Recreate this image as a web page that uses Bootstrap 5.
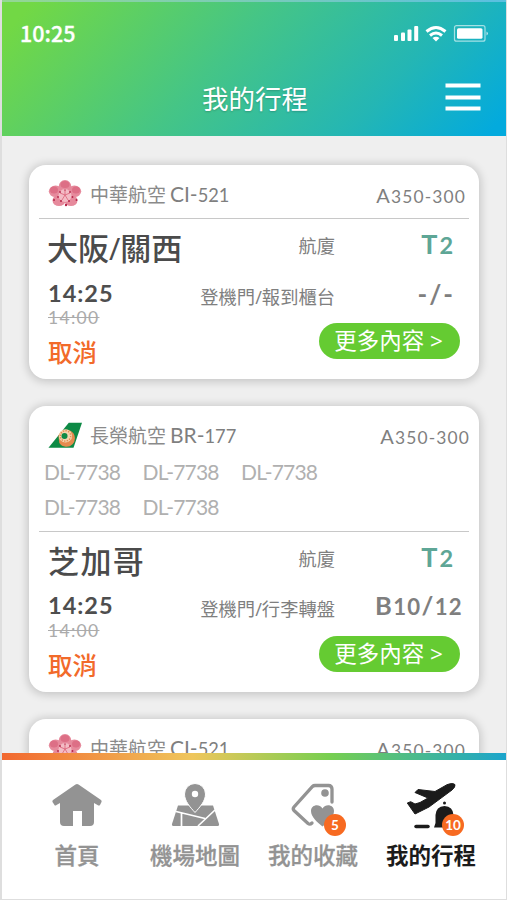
<!DOCTYPE html>
<html lang="zh-Hant">
<head>
<meta charset="utf-8">
<meta name="viewport" content="width=device-width, initial-scale=1">
<title>我的行程</title>
<link href="https://cdn.jsdelivr.net/npm/bootstrap@5.3.0/dist/css/bootstrap.min.css" rel="stylesheet">
<style>
body{font-family:"Open Sans","Noto Sans CJK TC",sans-serif;background:#efefef;color:#7f7f7f}
.phone{height:900px;border:1px solid #dedede;border-left-width:2px;border-top:0}
.app-head{height:136px;flex:none;margin-left:-1px;background:linear-gradient(132deg,#72d845 5%,#45c586 43%,#24b6b4 74%,#03aadd 97%);color:#fff;border-top:2px solid rgba(225,225,225,.4);border-left:1px solid rgba(225,225,225,.45)}
.status-row{height:62px;padding:0 16px 0 18px}
.clock{font:500 21.5px/1 "Noto Sans CJK TC",sans-serif;-webkit-text-stroke:.3px #fff}
.title-row{height:68px}
.title-row h1{font:400 26.5px/1 "Noto Sans CJK TC",sans-serif;text-shadow:0 1px 2px rgba(0,0,0,.2);grid-column:2}
.title-grid{display:grid;grid-template-columns:1fr auto 1fr;padding:0 25px 0 27px}
.trips{padding:29px 27px 0 27px;gap:27px}
.trip{border:0;border-radius:17px;flex:none;box-shadow:0 1px 9px 2px rgba(0,0,0,.17)}
.trip-head{height:53px;padding:5px 14px 0 19px}
.airline{font-size:19px;margin-left:8px;color:#8a8a8a;white-space:nowrap}
.code{font-size:21px;color:#7f7f7f;margin-left:-1px}
.num{font-family:Lato,"Open Sans",sans-serif}
.sm{font-size:.87em}
.model{font-size:20px;letter-spacing:1.150px;padding-top:3px;margin-right:-1px}
.br .model{margin-right:-5px;padding-top:2px}
.shares{height:72px;padding:0 0 1px 15px;margin-top:-5px;margin-bottom:5px;color:#b0b0b0;font-size:21px;letter-spacing:-.8px;line-height:35px}
.share{width:98.500px}
.rule{height:1px;margin:0 10px;background:#c8c8c8}
.trip-body{height:160px}
.left-col{width:166px;padding-left:19px}
.city{font-size:31px;line-height:58px;margin-bottom:2px;font-weight:500;color:#4b4b4b;white-space:nowrap;margin-left:-1px}
.br .city{letter-spacing:1.400px;margin-left:0}
.time{font-size:23.500px;line-height:28px;font-weight:700;color:#4e4e4e;letter-spacing:1px}
.br .time{margin-top:-1px;margin-bottom:1px}
.old{font-size:17.500px;line-height:22px;color:#ababab;text-decoration:line-through;letter-spacing:1.300px}
.cancel{font-size:24.500px;line-height:34px;margin-top:7px;font-weight:500;color:#f26a2a}
.facts{display:grid;grid-template-columns:140px 1fr;grid-template-rows:54px 48px 39px;width:284px;align-items:center}
.lab{font-size:18.3px;text-align:right;white-space:nowrap}
.br .dual-lab{margin-top:-3px}
.val{font-size:26px;font-weight:700;text-align:right;letter-spacing:2px;white-space:nowrap}
.term{margin-top:-3px}
.dual{margin-top:-5px}
.gate{font-size:25.500px;letter-spacing:1.300px;margin-top:-9px}
.term{color:#5ea696;font-size:27px}
.more{grid-column:1/3;justify-self:end;width:141px;height:36px;margin-right:19px;border-radius:18px;background:#65cb32;color:#fff;font-size:22.500px;line-height:34px;padding:0 2px 0 0;border:0}
.stripe{height:7px;flex:none;margin:0 -1px 0 -2px;background:linear-gradient(90deg,#f2672f,#efc65c 38%,#77cf50 65%,#1aa4cd)}
.tabs{height:139px;flex:none;background:#fff;padding:21px 15px 0 16px}
.tab{width:118px;font-size:22.500px;font-weight:500;color:#939393}
.tab .ic{width:60px;height:50px}
.tab span.t{line-height:30px;margin-top:10px;white-space:nowrap;-webkit-text-stroke:.3px}
.tab.on{color:#1b1b1b;font-weight:700}
.tab.on span.t{-webkit-text-stroke:0}
.count{position:absolute;width:22px;height:22px;left:41px;top:33px;border-radius:50%;background:#f76a21;color:#fff;font-size:13.500px;line-height:22px;text-align:center;font-weight:700}
</style>
</head>
<body>
<svg class="d-none">
<symbol id="plum" viewBox="0 0 34 30">
<g fill="#e68a9c"><ellipse cx="17" cy="7.500" rx="6.300" ry="6.500"/><ellipse cx="7.600" cy="12.300" rx="6.800" ry="5.800"/><ellipse cx="26.400" cy="12.300" rx="6.800" ry="5.800"/><ellipse cx="11" cy="21.500" rx="6.500" ry="5.500"/><ellipse cx="23" cy="21.500" rx="6.500" ry="5.500"/></g>
<g fill="#dd6f86"><ellipse cx="17" cy="5.500" rx="4.500" ry="3.500"/><ellipse cx="6" cy="11" rx="4" ry="3.500"/><ellipse cx="28" cy="11" rx="4" ry="3.500"/></g>
<circle cx="17" cy="16.500" r="6.500" fill="#f3bcc5"/>
<path d="M17 16V11M17 16l-5-2M17 16l5-2M17 16l-3 5M17 16l3 5" stroke="#d9566f" stroke-width=".7"/>
<g fill="#b52549"><circle cx="12" cy="13" r=".9"/><circle cx="17" cy="11" r=".7"/><circle cx="22" cy="13" r=".9"/><circle cx="10" cy="18" r=".9"/><circle cx="24.500" cy="18" r=".9"/><circle cx="13" cy="22" r="1"/><circle cx="21" cy="22" r="1"/><circle cx="28.500" cy="21" r="1"/><circle cx="6" cy="21" r="1"/><circle cx="18" cy="26" r="1.200"/></g>
</symbol>
<symbol id="eva" viewBox="0 0 36 28">
<path d="M22 1H36L27 27.500H.5Z" fill="#0d8a45"/><path d="M11 14.500A9 9 0 1 1 12 22.500Z" fill="#e58a4e"/><circle cx="18.500" cy="15" r="7" fill="#f3d5ae"/><circle cx="18.500" cy="15" r="5.500" fill="none" stroke="#e58a4e" stroke-width="1.500" stroke-dasharray="1.500 1.300"/><circle cx="17.500" cy="15" r="3.200" fill="#0d8a45"/>
</symbol>
</svg>
<div class="phone d-flex flex-column overflow-hidden">
<header class="app-head">
<div class="status-row d-flex align-items-center justify-content-between">
<div class="clock">10:25</div>
<svg width="96" height="20" viewBox="0 0 96 20" fill="#fff"><rect x="0" y="12" width="4" height="6" rx="1"/><rect x="7" y="9.500" width="4" height="8.500" rx="1"/><rect x="13.500" y="6.500" width="4" height="11.500" rx="1"/><rect x="20.200" y="3" width="4" height="15" rx="1"/>
<g fill="none" stroke="#fff" stroke-width="3"><path d="M32.500 8.500Q42 .5 51.500 8.500"/><path d="M36 12.500Q42 7.500 48 12.500"/></g><path d="M38.500 15Q42 12.500 45.500 15L42 18.500Z"/>
<rect x="60.500" y="2.700" width="30.500" height="15.500" rx="2" fill="none" stroke="#fff" stroke-opacity=".6" stroke-width="1.200"/><rect x="63" y="5.200" width="25.500" height="10.500" rx="1.500"/><path d="M92.500 8.500q3 2 0 4Z" fill-opacity=".7"/></svg>
</div>
<div class="title-row title-grid align-items-center">
<h1 class="m-0">我的行程</h1>
<svg class="ms-auto" width="36" height="30" viewBox="0 0 36 30" fill="#fff"><rect x=".5" y=".5" width="35" height="4"/><rect x=".5" y="12.500" width="35" height="4"/><rect x=".5" y="23.500" width="35" height="4"/></svg>
</div>
</header>
<main class="trips d-flex flex-column flex-grow-1 overflow-hidden">
<section class="trip card">
<div class="trip-head d-flex align-items-center"><svg width="34" height="30"><use href="#plum"/></svg><span class="airline">中華航空 <span class="code num">CI-<span class="sm">521</span></span></span><span class="model num ms-auto">A<span class="sm">350-300</span></span></div>
<div class="rule"></div>
<div class="trip-body d-flex justify-content-between">
<div class="left-col"><div class="city">大阪/關西</div><div class="time num">14:25</div><div class="old num">14:00</div><div class="cancel">取消</div></div>
<div class="facts"><div class="lab">航廈</div><div class="val num term pe-4">T<span class="sm">2</span></div><div class="lab dual-lab">登機門/報到櫃台</div><div class="val num dual pe-4">-/-</div><button class="more btn">更多內容 &gt;</button></div>
</div>
</section>
<section class="trip card br">
<div class="trip-head d-flex align-items-center"><svg width="34" height="30"><use href="#eva"/></svg><span class="airline">長榮航空 <span class="code num">BR-<span class="sm">177</span></span></span><span class="model num ms-auto">A<span class="sm">350-300</span></span></div>
<div class="shares num"><div class="d-flex"><span class="share">DL-7738</span><span class="share">DL-7738</span><span class="share">DL-7738</span></div><div class="d-flex"><span class="share">DL-7738</span><span class="share">DL-7738</span></div></div>
<div class="rule"></div>
<div class="trip-body d-flex justify-content-between">
<div class="left-col"><div class="city">芝加哥</div><div class="time num">14:25</div><div class="old num">14:00</div><div class="cancel">取消</div></div>
<div class="facts"><div class="lab">航廈</div><div class="val num term pe-4">T<span class="sm">2</span></div><div class="lab dual-lab">登機門/行李轉盤</div><div class="val gate num pe-3">B<span class="sm">10</span>/<span class="sm">12</span></div><button class="more btn">更多內容 &gt;</button></div>
</div>
</section>
<section class="trip card">
<div class="trip-head d-flex align-items-center"><svg width="34" height="30"><use href="#plum"/></svg><span class="airline">中華航空 <span class="code num">CI-<span class="sm">521</span></span></span><span class="model num ms-auto">A<span class="sm">350-300</span></span></div>
</section>
</main>
<div class="stripe"></div>
<nav class="tabs d-flex">
<div class="tab d-flex flex-column align-items-center"><svg class="ic" viewBox="0 0 60 50" fill="currentColor"><path d="M28.500 3.500Q30 2.300 31.500 3.500L54 19Q55 20 54.500 21L53 24Q52 25 50.500 24L47 22V41Q47 45 43 45H35V30H26V45H17Q13 45 13 41V22L9.500 24Q8 25 7.500 24L5.500 21Q5 20 6 19Z"/></svg><span class="t">首頁</span></div>
<div class="tab d-flex flex-column align-items-center"><svg class="ic" viewBox="0 0 60 50" fill="currentColor"><path d="M13 24.500H48L54 43Q54.500 45 52 45H9Q6.500 45 7 43Z"/><path d="M11 30.500 40 37.500M16.500 32V45M50 29 33 45" stroke="#fff" stroke-width="1.700" fill="none"/><path d="M30 2.500A10.500 10.500 0 0 1 40.500 13C40.500 20 35 26 30 31.500C25 26 19.500 20 19.500 13A10.500 10.500 0 0 1 30 2.500Z" stroke="#fff" stroke-width="1"/><circle cx="30" cy="13" r="3.200" fill="#fff"/></svg><span class="t">機場地圖</span></div>
<div class="tab d-flex flex-column align-items-center"><div class="ic position-relative"><svg class="d-block" width="60" height="50" viewBox="0 0 60 50" fill="currentColor"><path d="M49 21V8Q49 4.500 45.500 4.500H32Q30.500 4.500 29.500 5.500L11 26Q9.500 28 11 29.500L25 42.500Q27 44 29 42" fill="none" stroke="currentColor" stroke-width="3.300" stroke-linecap="round"/><circle cx="42" cy="12" r="3.800"/><path d="M39.500 45.500C34 41 28 36 28 30C28 24 36 22 39.500 27.500C43 22 51 24 51 30C51 36 45 41 39.500 45.500Z"/></svg><span class="count num">5</span></div><span class="t">我的收藏</span></div>
<div class="tab on d-flex flex-column align-items-center"><div class="ic position-relative"><svg class="d-block" width="60" height="50" viewBox="0 0 60 50" fill="currentColor"><path d="M6.300 22 9.700 20.700 14 23 19 21.500 27 17 14 11.500 17 8.500 34 10.500 46 3.700Q52 1.500 54 3.700Q54.500 6 51 9L28 26 14 33Z" stroke="currentColor" stroke-width="1" stroke-linejoin="round"/><path d="M15 45.500H27" stroke="currentColor" stroke-width="3.500" stroke-linecap="round"/><circle cx="43.500" cy="22" r="1.500"/><path d="M33 46.500 34.500 42V34Q35 25.500 43.500 25Q52 25.500 52.500 34V41L54 46.500Z"/></svg><span class="count num">10</span></div><span class="t">我的行程</span></div>
</nav>
</div>
<script src="https://cdn.jsdelivr.net/npm/bootstrap@5.3.0/dist/js/bootstrap.bundle.min.js"></script>
</body>
</html>
